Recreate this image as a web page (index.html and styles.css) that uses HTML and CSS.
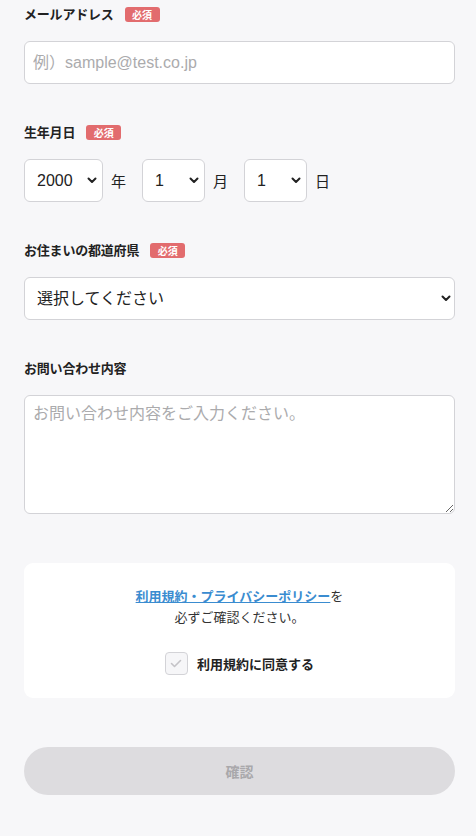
FILE: index.html
```html
<!DOCTYPE html>
<html lang="ja">
<head>
<meta charset="utf-8">
<title>お問い合わせ</title>
<link rel="stylesheet" href="styles.css">
</head>
<body>
<form class="form">
  <div class="field">
    <div class="label-row"><span class="label">メールアドレス</span><span class="badge">必須</span></div>
    <input class="input" type="email" placeholder="例）sample@test.co.jp">
  </div>

  <div class="field">
    <div class="label-row"><span class="label">生年月日</span><span class="badge">必須</span></div>
    <div class="date-row">
      <span class="select-wrap w-year">
        <select class="select"><option>2000</option></select>
        <svg class="chev" width="10" height="7" viewBox="0 0 10 7"><path d="M1.5 1.5 L5 5 L8.5 1.5" fill="none" stroke="#222" stroke-width="2" stroke-linecap="round" stroke-linejoin="round"/></svg>
      </span>
      <span class="unit">年</span>
      <span class="select-wrap w-md">
        <select class="select"><option>1</option></select>
        <svg class="chev" width="10" height="7" viewBox="0 0 10 7"><path d="M1.5 1.5 L5 5 L8.5 1.5" fill="none" stroke="#222" stroke-width="2" stroke-linecap="round" stroke-linejoin="round"/></svg>
      </span>
      <span class="unit">月</span>
      <span class="select-wrap w-md">
        <select class="select"><option>1</option></select>
        <svg class="chev" width="10" height="7" viewBox="0 0 10 7"><path d="M1.5 1.5 L5 5 L8.5 1.5" fill="none" stroke="#222" stroke-width="2" stroke-linecap="round" stroke-linejoin="round"/></svg>
      </span>
      <span class="unit">日</span>
    </div>
  </div>

  <div class="field">
    <div class="label-row"><span class="label">お住まいの都道府県</span><span class="badge">必須</span></div>
    <span class="select-wrap w-full">
      <select class="select"><option>選択してください</option></select>
      <svg class="chev chev-full" width="10" height="7" viewBox="0 0 10 7"><path d="M1.5 1.5 L5 5 L8.5 1.5" fill="none" stroke="#222" stroke-width="2" stroke-linecap="round" stroke-linejoin="round"/></svg>
    </span>
  </div>

  <div class="field">
    <div class="label-row"><span class="label">お問い合わせ内容</span></div>
    <textarea class="textarea" placeholder="お問い合わせ内容をご入力ください。"></textarea>
  </div>

  <div class="card">
    <p class="notice"><a class="link" href="#">利用規約・プライバシーポリシー</a>を<br>必ずご確認ください。</p>
    <label class="agree">
      <span class="checkbox">
        <svg width="12" height="9" viewBox="0 0 12 9"><path d="M1.5 4.5 L4.5 7.5 L10.5 1.5" fill="none" stroke="#c4c3c7" stroke-width="1.6" stroke-linecap="round" stroke-linejoin="round"/></svg>
      </span>
      <span class="agree-text">利用規約に同意する</span>
    </label>
  </div>

  <button class="submit" type="button" disabled>確認</button>
</form>
</body>
</html>
```

FILE: styles.css
```css
* {
  box-sizing: border-box;
}

html, body {
  margin: 0;
  padding: 0;
  background: #f7f7f9;
}

body {
  font-family: "Liberation Sans", "Noto Sans CJK JP", sans-serif;
  color: #222;
}

.form {
  padding: 4px 21px 40px 24px;
  display: flex;
  flex-direction: column;
}

.field {
  display: flex;
  flex-direction: column;
  margin-bottom: 38px;
}

.label-row {
  display: flex;
  align-items: center;
  height: 20px;
  margin-bottom: 17px;
}

.label {
  font-family: "Noto Sans CJK JP", sans-serif;
  font-size: 13px;
  font-weight: 700;
  line-height: 20px;
  color: #222;
  letter-spacing: -0.2px;
}

.badge {
  margin-left: 11px;
  width: 35px;
  height: 15px;
  border-radius: 3px;
  background: #e26c6e;
  color: #fff;
  font-family: "Noto Sans CJK JP", sans-serif;
  font-size: 10px;
  font-weight: 700;
  line-height: 15px;
  text-align: center;
}

.input,
.select,
.textarea {
  font-family: "Liberation Sans", "Noto Sans CJK JP", sans-serif;
  font-size: 16px;
  color: #222;
  background: #fff;
  border: 1px solid #d3d3d7;
  border-radius: 6px;
  outline: none;
}

.input {
  width: 100%;
  height: 43px;
  padding: 0 8px;
}

.input::placeholder,
.textarea::placeholder {
  color: #ababad;
}

.date-row {
  display: flex;
  align-items: center;
}

.select-wrap {
  position: relative;
  display: inline-block;
  height: 43px;
}

.w-year { width: 79px; }
.w-md { width: 63px; }
.w-full { width: 100%; }

.select {
  -webkit-appearance: none;
  appearance: none;
  width: 100%;
  height: 43px;
  padding: 0 20px 0 12px;
}

.chev {
  position: absolute;
  right: 6px;
  top: 18px;
  pointer-events: none;
}

.chev-full {
  right: 4px;
}

.unit {
  font-family: "Noto Sans CJK JP", sans-serif;
  font-size: 15px;
  color: #222;
  margin: 0 16px 0 8px;
}

.textarea {
  width: 100%;
  height: 119px;
  padding: 6px 8px;
  resize: vertical;
  line-height: 24px;
  display: block;
}

.card {
  margin-top: 11px;
  background: #fff;
  border-radius: 9px;
  padding: 22px 16px 23px;
  display: flex;
  flex-direction: column;
  align-items: center;
}

.notice {
  margin: 0;
  font-family: "Noto Sans CJK JP", sans-serif;
  font-size: 13px;
  line-height: 21px;
  text-align: center;
  color: #333;
}

.link {
  color: #3a8cd0;
  font-weight: 700;
  text-decoration: underline;
}

.agree {
  margin-top: 25px;
  display: flex;
  align-items: center;
}

.checkbox {
  width: 23px;
  height: 23px;
  border: 1px solid #d3d3d7;
  border-radius: 4px;
  background: #f6f6f8;
  display: flex;
  align-items: center;
  justify-content: center;
}

.agree-text {
  margin-left: 9px;
  font-family: "Noto Sans CJK JP", sans-serif;
  font-size: 13px;
  font-weight: 700;
  color: #222;
}

.submit {
  margin-top: 49px;
  width: 100%;
  height: 48px;
  border: none;
  border-radius: 24px;
  background: #dddcdf;
  color: #a9a8ab;
  font-family: "Noto Sans CJK JP", sans-serif;
  font-size: 14px;
  font-weight: 700;
}
```
